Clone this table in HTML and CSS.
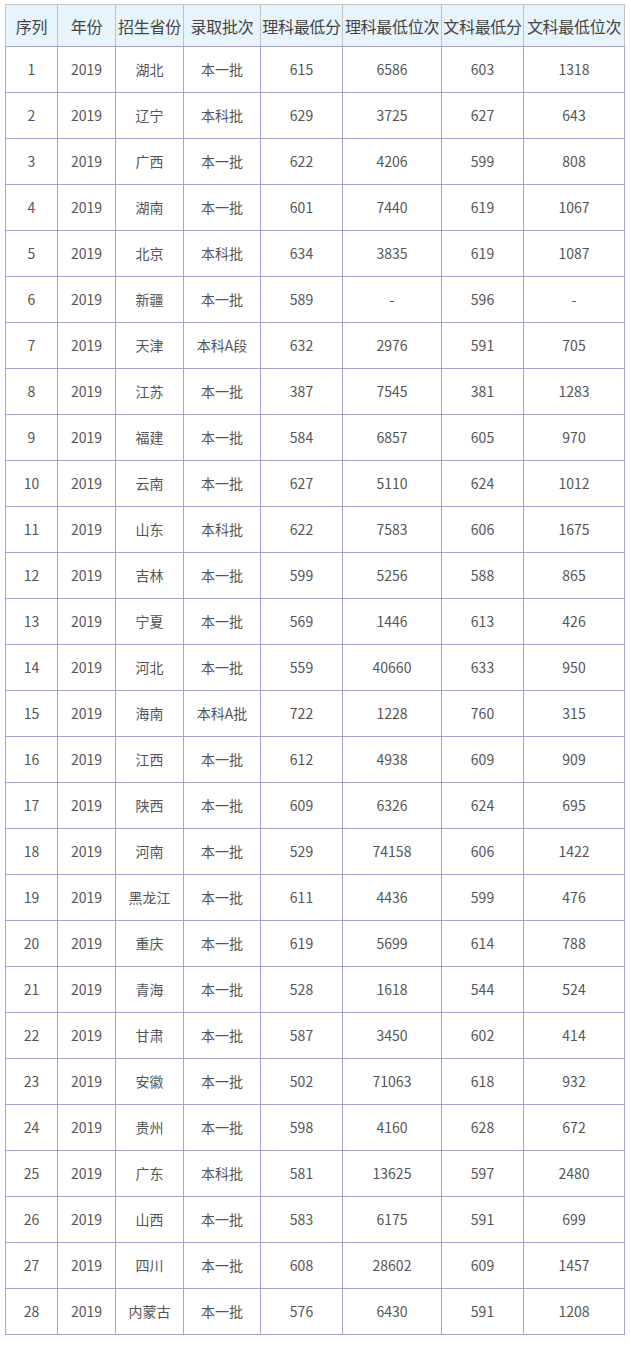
FILE: index.html
```html
<!DOCTYPE html>
<html lang="zh">
<head>
<meta charset="utf-8">
<link rel="stylesheet" href="styles.css">
</head>
<body>
<table class="score">
<colgroup>
<col class="c1"><col class="c2"><col class="c3"><col class="c4"><col class="c5"><col class="c6"><col class="c7"><col class="c8">
</colgroup>
<thead>
<tr><th>序列</th><th>年份</th><th>招生省份</th><th>录取批次</th><th>理科最低分</th><th>理科最低位次</th><th>文科最低分</th><th>文科最低位次</th></tr>
</thead>
<tbody>
<tr><td>1</td><td>2019</td><td>湖北</td><td>本一批</td><td>615</td><td>6586</td><td>603</td><td>1318</td></tr>
<tr><td>2</td><td>2019</td><td>辽宁</td><td>本科批</td><td>629</td><td>3725</td><td>627</td><td>643</td></tr>
<tr><td>3</td><td>2019</td><td>广西</td><td>本一批</td><td>622</td><td>4206</td><td>599</td><td>808</td></tr>
<tr><td>4</td><td>2019</td><td>湖南</td><td>本一批</td><td>601</td><td>7440</td><td>619</td><td>1067</td></tr>
<tr><td>5</td><td>2019</td><td>北京</td><td>本科批</td><td>634</td><td>3835</td><td>619</td><td>1087</td></tr>
<tr><td>6</td><td>2019</td><td>新疆</td><td>本一批</td><td>589</td><td>-</td><td>596</td><td>-</td></tr>
<tr><td>7</td><td>2019</td><td>天津</td><td>本科A段</td><td>632</td><td>2976</td><td>591</td><td>705</td></tr>
<tr><td>8</td><td>2019</td><td>江苏</td><td>本一批</td><td>387</td><td>7545</td><td>381</td><td>1283</td></tr>
<tr><td>9</td><td>2019</td><td>福建</td><td>本一批</td><td>584</td><td>6857</td><td>605</td><td>970</td></tr>
<tr><td>10</td><td>2019</td><td>云南</td><td>本一批</td><td>627</td><td>5110</td><td>624</td><td>1012</td></tr>
<tr><td>11</td><td>2019</td><td>山东</td><td>本科批</td><td>622</td><td>7583</td><td>606</td><td>1675</td></tr>
<tr><td>12</td><td>2019</td><td>吉林</td><td>本一批</td><td>599</td><td>5256</td><td>588</td><td>865</td></tr>
<tr><td>13</td><td>2019</td><td>宁夏</td><td>本一批</td><td>569</td><td>1446</td><td>613</td><td>426</td></tr>
<tr><td>14</td><td>2019</td><td>河北</td><td>本一批</td><td>559</td><td>40660</td><td>633</td><td>950</td></tr>
<tr><td>15</td><td>2019</td><td>海南</td><td>本科A批</td><td>722</td><td>1228</td><td>760</td><td>315</td></tr>
<tr><td>16</td><td>2019</td><td>江西</td><td>本一批</td><td>612</td><td>4938</td><td>609</td><td>909</td></tr>
<tr><td>17</td><td>2019</td><td>陕西</td><td>本一批</td><td>609</td><td>6326</td><td>624</td><td>695</td></tr>
<tr><td>18</td><td>2019</td><td>河南</td><td>本一批</td><td>529</td><td>74158</td><td>606</td><td>1422</td></tr>
<tr><td>19</td><td>2019</td><td>黑龙江</td><td>本一批</td><td>611</td><td>4436</td><td>599</td><td>476</td></tr>
<tr><td>20</td><td>2019</td><td>重庆</td><td>本一批</td><td>619</td><td>5699</td><td>614</td><td>788</td></tr>
<tr><td>21</td><td>2019</td><td>青海</td><td>本一批</td><td>528</td><td>1618</td><td>544</td><td>524</td></tr>
<tr><td>22</td><td>2019</td><td>甘肃</td><td>本一批</td><td>587</td><td>3450</td><td>602</td><td>414</td></tr>
<tr><td>23</td><td>2019</td><td>安徽</td><td>本一批</td><td>502</td><td>71063</td><td>618</td><td>932</td></tr>
<tr><td>24</td><td>2019</td><td>贵州</td><td>本一批</td><td>598</td><td>4160</td><td>628</td><td>672</td></tr>
<tr><td>25</td><td>2019</td><td>广东</td><td>本科批</td><td>581</td><td>13625</td><td>597</td><td>2480</td></tr>
<tr><td>26</td><td>2019</td><td>山西</td><td>本一批</td><td>583</td><td>6175</td><td>591</td><td>699</td></tr>
<tr><td>27</td><td>2019</td><td>四川</td><td>本一批</td><td>608</td><td>28602</td><td>609</td><td>1457</td></tr>
<tr><td>28</td><td>2019</td><td>内蒙古</td><td>本一批</td><td>576</td><td>6430</td><td>591</td><td>1208</td></tr>
</tbody>
</table>
</body>
</html>
```

FILE: styles.css
```css
html, body {
  margin: 0;
  padding: 0;
  background: #ffffff;
}
body {
  padding: 4px 5px;
  font-family: "Noto Sans CJK SC", "Noto Sans", sans-serif;
  color: #555555;
}
.score {
  border-collapse: collapse;
  table-layout: fixed;
  width: 619px;
}
.c1 { width: 52px; }
.c2 { width: 58px; }
.c3 { width: 68px; }
.c4 { width: 77px; }
.c5 { width: 82px; }
.c6 { width: 99px; }
.c7 { width: 82px; }
.c8 { width: 101px; }
.score th {
  background: #e8f4fc;
  border: 1px solid #c2c2c2;
  border-bottom-color: #aaa4cc;
  height: 41px;
  padding: 0;
  font-size: 16px;
  font-weight: normal;
  color: #444444;
  text-align: center;
  white-space: nowrap;
  letter-spacing: -0.3px;
}
.score td {
  border: 1px solid #aaa0d2;
  height: 43px;
  padding: 0 0 2px;
  font-size: 14px;
  text-align: center;
  color: #555555;
  white-space: nowrap;
}
```
